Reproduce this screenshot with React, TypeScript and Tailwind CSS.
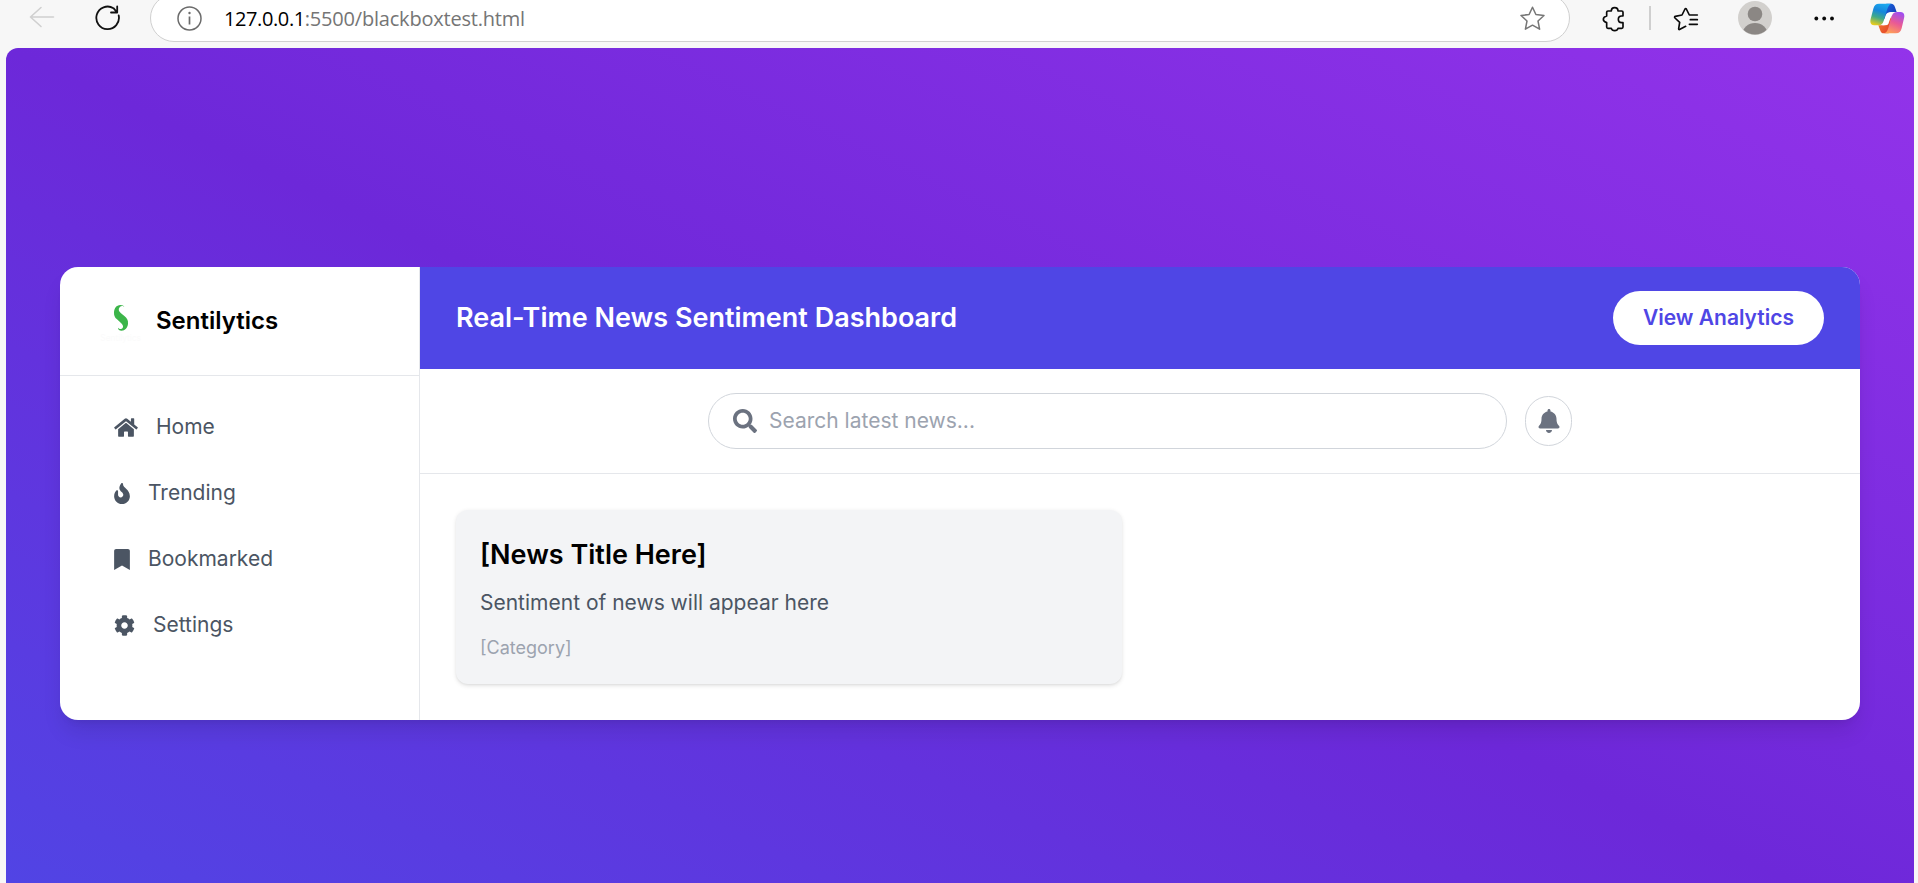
import React from "react";
import { FaHome, FaFire, FaBookmark, FaCog, FaSearch, FaBell } from "react-icons/fa";

function CopilotIcon() {
  return (
    <svg className="h-[31px] w-[35px]" viewBox="269 7 105 93">
      <defs>
        <linearGradient id="cpA" x1="0.6" y1="0" x2="0.3" y2="1">
          <stop offset="0" stopColor="#1ba8ee" />
          <stop offset="0.35" stopColor="#1787dc" />
          <stop offset="0.65" stopColor="#3fa98a" />
          <stop offset="1" stopColor="#e8cc1c" />
        </linearGradient>
        <linearGradient id="cpB" x1="0" y1="0" x2="1" y2="1">
          <stop offset="0" stopColor="#1e6be0" />
          <stop offset="1" stopColor="#0f2fae" />
        </linearGradient>
        <linearGradient id="cpC" x1="0.7" y1="0" x2="0.3" y2="1">
          <stop offset="0" stopColor="#a04ef0" />
          <stop offset="0.5" stopColor="#ea5a94" />
          <stop offset="1" stopColor="#ffa157" />
        </linearGradient>
        <linearGradient id="cpD" x1="0" y1="0" x2="1" y2="1">
          <stop offset="0" stopColor="#f8862e" />
          <stop offset="1" stopColor="#e03a2b" />
        </linearGradient>
      </defs>
      <path d="M318 9H332C339 9 342 13 344 20L349 34H335C326 34 322 38 319 46L309 60Z" fill="url(#cpB)" />
      <path d="M325 98H311C304 98 301 94 299 87L294 74H309C317 74 321 70 324 62L334 46Z" fill="url(#cpD)" />
      <path d="M330 35H336L324 70Q322 74 314 74H306L316 44Q319 35 330 35Z" fill="#ffffff" />
      <path d="M296 9H334C326 11 323 18 320 28L310 60C307 70 302 74 292 74H282C272 74 268 67 271 55L279 24C282 14 286 9 296 9Z" fill="url(#cpA)" />
      <path d="M347 98H311C319 96 322 89 325 79L333 50C336 39 341 34 351 34H360C370 34 374 41 371 53L364 83C361 93 357 98 347 98Z" fill="url(#cpC)" />
    </svg>
  );
}

function BrowserBar() {
  return (
    <header className="h-12 shrink-0 overflow-hidden bg-[#f7f7f7]">
      <div className="-mt-[6px] flex h-12 items-center">
        <svg className="ml-[29px] h-6 w-[26px]" viewBox="0 0 26 24" fill="none" stroke="#d0d0d0" strokeWidth="1.6" strokeLinecap="round" strokeLinejoin="round">
          <path d="M24.5 11H1.5M12 1.5 1.5 11 12 20.5" />
        </svg>
        <svg className="ml-[40px] h-[26px] w-[26px]" viewBox="0 0 26 26" fill="none" stroke="#111" strokeWidth="1.8" strokeLinecap="round" strokeLinejoin="round">
          <path d="M23.7 10.5A11.3 11.3 0 1 1 18.5 3.2L22 7.3M22.2 1.5V7.5H16" />
        </svg>
        <div className="ml-[29px] flex h-12 w-[1420px] shrink-0 items-center rounded-full border-[1.5px] border-[#d0d0d0] bg-white pl-[26px] pr-[24px]">
          <svg className="h-[25px] w-[25px]" viewBox="0 0 25 25" fill="none" stroke="#6b6b6b" strokeWidth="1.5">
            <circle cx="12.5" cy="12.5" r="11.5" />
            <path d="M12.5 10.5V18.5" strokeWidth="1.7" />
            <circle cx="12.5" cy="7" r="1.2" fill="#6b6b6b" stroke="none" />
          </svg>
          <div className="ml-[22px] flex-1 pt-[2px] font-['Open_Sans',sans-serif] text-[20px] leading-none tracking-[-0.2px] text-[#757575]">
            <span className="tracking-[-0.4px] text-black">127.0.0.1</span>:5500/blackboxtest.html
          </div>
          <svg className="h-[25px] w-[25px]" viewBox="0 0 25 25" fill="none" stroke="#767676" strokeWidth="1.5" strokeLinejoin="round">
            <path d="M12.5 1.2 15.9 8.5 24 9.5 18 15 19.6 23.2 12.5 19.2 5.4 23.2 7 15 1 9.5 9.1 8.5Z" />
          </svg>
        </div>
        <svg className="ml-[32px] mt-[2px] h-[26px] w-6 shrink-0" viewBox="36 18 72 78" fill="none" stroke="#0a0a0a" strokeWidth="5" strokeLinejoin="round">
          <path d="M54 33H64C64 26 68 23 74 23S84 26 84 33H95Q99 33 99 37V48H95C89 48 85 52 85 58S89 68 95 68H99V81Q99 85 95 85H84C83 89 79 92 74 92S65 89 64 85H54Q50 85 50 81V68C43 66 40 63 40 58S43 50 50 48V37Q50 33 54 33Z" />
        </svg>
        <div className="ml-[23px] h-6 w-[2px] bg-[#cfcfcf]" />
        <svg className="ml-[22px] mt-[2px] h-[26px] w-[26px] shrink-0" viewBox="250 18 78 78" fill="none" stroke="#0a0a0a" strokeWidth="5" strokeLinecap="round" strokeLinejoin="round">
          <path d="M323 45H299L290 27Q288 24 286 27L277 45L257 49Q253 51 256 54L270 67L267 86Q267 90 271 88L288 79M302 59H323M299 73H323" />
        </svg>
        <svg className="ml-[39px] h-[34px] w-[34px] shrink-0" viewBox="0 0 34 34">
          <defs>
            <clipPath id="avatarClip"><circle cx="17" cy="17" r="16.5" /></clipPath>
          </defs>
          <circle cx="17" cy="17" r="17" fill="#d2d0cd" />
          <circle cx="17" cy="13" r="7.3" fill="#8b8784" />
          <ellipse cx="17" cy="33" rx="12.5" ry="11" fill="#8b8784" clipPath="url(#avatarClip)" />
        </svg>
        <svg className="ml-[42px] h-5 w-5 shrink-0" viewBox="0 0 20 20" fill="#0a0a0a">
          <circle cx="2.3" cy="10.5" r="1.9" />
          <circle cx="10.2" cy="10.5" r="1.9" />
          <circle cx="18" cy="10.5" r="1.9" />
        </svg>
        <div className="ml-[36px] shrink-0">
          <CopilotIcon />
        </div>
      </div>
    </header>
  );
}

const nav = [
  { label: "Home", Icon: FaHome, size: "w-[24px]" },
  { label: "Trending", Icon: FaFire, size: "w-[16px]" },
  { label: "Bookmarked", Icon: FaBookmark, size: "w-[16px]" },
  { label: "Settings", Icon: FaCog, size: "w-[21px]" },
];

function Sidebar() {
  return (
    <aside className="w-[360px] shrink-0 border-r border-[#e5e7eb]">
      <div className="flex h-[109px] items-center border-b border-[#e5e7eb] pl-9">
        <svg className="h-[54px] w-[46px]" viewBox="-12 -3 138 162">
          <path d="M73 37C70 32 63 32 59 37C54 43 56 49 63 55L74 64C81 70 85 76 84 86C83 98 75 107 65 107C58 107 54 103 54 98C58 103 65 104 68 99C71 94 68 89 63 84L51 73C44 67 42 61 42 53C42 41 49 30 61 30C67 30 72 32 73 37Z" fill="#3cb54a" />
          <text x="62" y="137" textAnchor="middle" fontSize="25" fill="#fbfbfb">Sentilytics</text>
        </svg>
        <span className="ml-[14px] text-2xl font-semibold text-black">Sentilytics</span>
      </div>
      <nav className="pt-[18px]">
        {nav.map(({ label, Icon, size }) => (
          <a key={label} className="flex h-[66px] items-center gap-[18px] pl-[54px] text-[21px] text-[#4b5563]">
            <Icon className={`${size} h-[21px] shrink-0`} />
            {label}
          </a>
        ))}
      </nav>
    </aside>
  );
}

function Main() {
  return (
    <main className="flex flex-1 flex-col">
      <div className="flex h-[102px] items-center justify-between bg-[#4f46e5] px-9">
        <h1 className="text-[27px] font-semibold text-white">Real-Time News Sentiment Dashboard</h1>
        <button className="rounded-full bg-white px-[30px] py-3 text-[21px] leading-[30px] font-semibold text-[#4f46e5]">View Analytics</button>
      </div>
      <div className="flex h-[105px] items-center justify-center gap-[18px] border-b border-[#e5e7eb]">
        <div className="flex h-[56px] w-[799px] items-center gap-3 rounded-full border border-[#d1d5db] px-6">
          <FaSearch className="size-6 text-[#6b7280]" />
          <span className="text-[21px] text-[#9ca3af]">Search latest news...</span>
        </div>
        <button className="flex h-[50px] w-[47px] items-center justify-center rounded-full border border-[#d1d5db] text-[#6b7280]">
          <FaBell className="size-6" />
        </button>
      </div>
      <div className="grid grid-cols-2 gap-9 p-9">
        <article className="rounded-xl bg-[#f3f4f6] p-6 shadow-[0_1.5px_4.5px_rgba(0,0,0,0.1),0_1.5px_3px_-1.5px_rgba(0,0,0,0.1)]">
          <h2 className="text-[27px] leading-[42px] font-semibold text-black">[News Title Here]</h2>
          <p className="mt-3 text-[21px] leading-[30px] text-[#4b5563]">Sentiment of news will appear here</p>
          <p className="mt-[18px] text-lg leading-6 text-[#9ca3af]">[Category]</p>
        </article>
      </div>
    </main>
  );
}

export default function App() {
  return (
    <div className="flex h-[883px] w-full flex-col overflow-hidden bg-[#f7f7f7] font-['Inter',sans-serif]">
      <BrowserBar />
      <div className="ml-[6px] mr-1 flex h-[891px] shrink-0 items-center justify-center rounded-t-xl bg-[linear-gradient(to_top_right,#4f46e5,#6d28d9,#9333ea)]">
        <div className="flex h-[453px] w-[1800px] overflow-hidden rounded-[18px] bg-white shadow-[0_15px_22.5px_-4.5px_rgba(0,0,0,0.1),0_6px_9px_-6px_rgba(0,0,0,0.1)]">
          <Sidebar />
          <Main />
        </div>
      </div>
    </div>
  );
}
